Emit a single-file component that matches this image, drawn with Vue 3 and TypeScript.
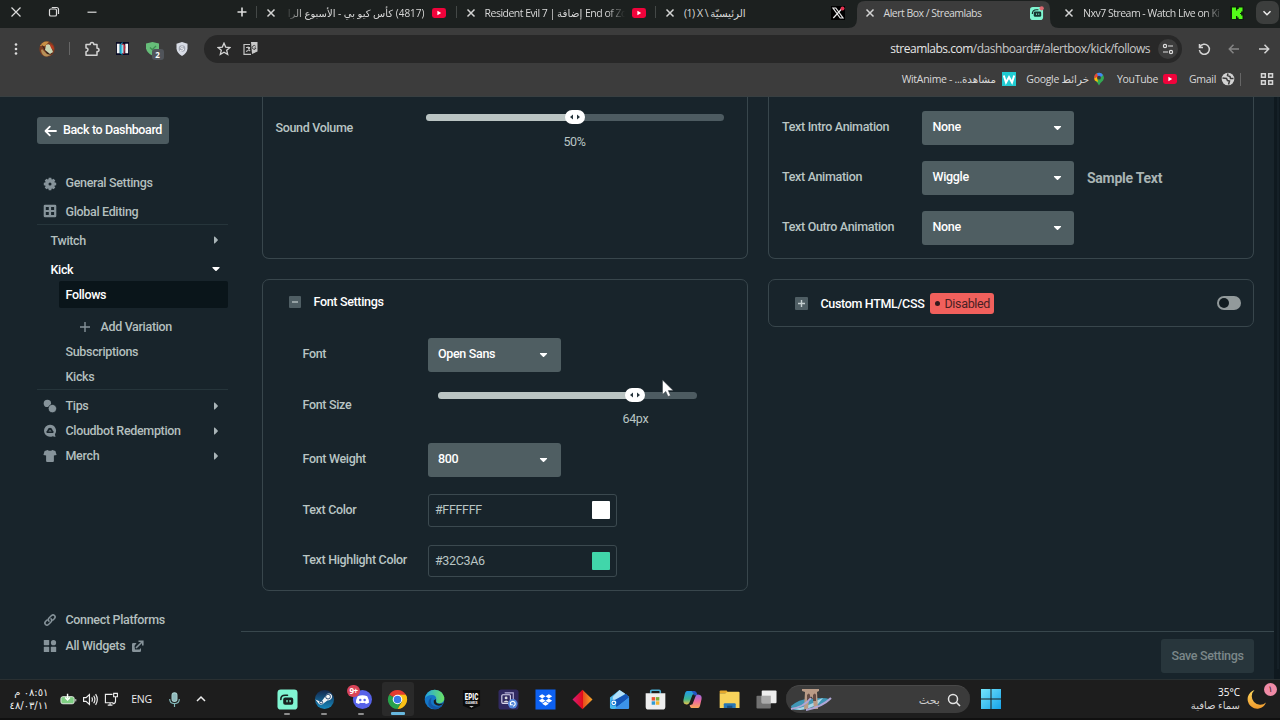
<script setup lang="ts">
interface NavItem {
  label: string
  kind: string
  icon?: string
  arrow?: string
}

const nav: NavItem[] = [
  { label: 'General Settings', kind: 'top first', icon: 'gear' },
  { label: 'Global Editing', kind: 'top ruled', icon: 'table' },
  { label: 'Twitch', kind: 'platform', arrow: 'right' },
  { label: 'Kick', kind: 'platform open', arrow: 'down' },
  { label: 'Follows', kind: 'sub active' },
  { label: 'Add Variation', kind: 'add', icon: 'plus' },
  { label: 'Subscriptions', kind: 'sub' },
  { label: 'Kicks', kind: 'sub last' },
  { label: 'Tips', kind: 'group', icon: 'coins', arrow: 'right' },
  { label: 'Cloudbot Redemption', kind: 'group', icon: 'cloudbot', arrow: 'right' },
  { label: 'Merch', kind: 'group', icon: 'shirt', arrow: 'right' },
]

const animations = [
  { label: 'Text Intro Animation', value: 'None', sample: '' },
  { label: 'Text Animation', value: 'Wiggle', sample: 'Sample Text' },
  { label: 'Text Outro Animation', value: 'None', sample: '' },
]

const colors = [
  { label: 'Text Color', value: '#FFFFFF', swatch: '#ffffff' },
  { label: 'Text Highlight Color', value: '#32C3A6', swatch: '#41d6aa' },
]

const volume = 50
const fontSize = 76.4
</script>

<template>
  <div class="screen">
    <svg class="defs" aria-hidden="true">
      <symbol id="close" viewBox="0 0 10 10"><path d="M1.5 1.5l7 7M8.5 1.5l-7 7" fill="none" stroke="currentColor" stroke-width="1.5" /></symbol>
      <symbol id="youtube" viewBox="0 0 14 10"><rect width="14" height="10" rx="2.4" fill="#f0033b" /><path d="M5.4 2.8v4.4L9.2 5z" fill="#fff" /></symbol>
      <symbol id="down" viewBox="0 0 8 6"><path d="M.6 1h6.8q.5.5 0 1L4.6 4.8q-.6.5-1.2 0L.6 2q-.5-.5 0-1z" fill="currentColor" /></symbol>
      <symbol id="right" viewBox="0 0 6 8"><path d="M1 .8v6.4q.5.5 1 0L4.7 4.6q.5-.6 0-1.2L2 .8q-.5-.5-1 0z" fill="currentColor" /></symbol>
      <symbol id="gear" viewBox="0 0 14 14"><g fill="currentColor"><path fill-rule="evenodd" d="M7 2.2a4.8 4.8 0 1 0 0 9.6 4.8 4.8 0 0 0 0-9.6zm0 3.3a1.5 1.5 0 1 1 0 3 1.5 1.5 0 0 1 0-3z" /><path d="M5.7.8h2.6l.4 2.4H5.3zM5.7 13.2h2.6l.4-2.4H5.3zM.8 5.7v2.6l2.4.4V5.3zM13.2 5.7v2.6l-2.4.4V5.3zM1.7 3.5L3.5 1.7l2 1.4-2.400 2.400zM12.300 3.500l-1.800-1.800-2 1.400 2.400 2.400zM1.700 10.500l1.800 1.800 2-1.400-2.400-2.400zM12.300 10.500l-1.800 1.800-2-1.400 2.400-2.400z" /></g></symbol>
      <symbol id="table" viewBox="0 0 14 14"><path fill="currentColor" fill-rule="evenodd" d="M2 .8h10q1.300 0 1.300 1.300v9.800q0 1.300-1.300 1.300H2q-1.300 0-1.300-1.300V2.100Q.7.800 2 .8zm.8 2.200v3h3V3zm5.300 0v3h3V3zm-5.300 5v3h3V8zm5.300 0v3h3V8z" /></symbol>
      <symbol id="plus" viewBox="0 0 12 12"><path d="M6 1v10M1 6h10" fill="none" stroke="currentColor" stroke-width="1.400" /></symbol>
      <symbol id="coins" viewBox="0 0 14 14"><g fill="currentColor"><circle cx="4.400" cy="4.400" r="3.700" /><circle cx="9.400" cy="9.600" r="4.200" stroke="#18242b" stroke-width=".8" /></g></symbol>
      <symbol id="cloudbot" viewBox="0 0 14 14"><path d="M7 .8a6 6 0 0 0 0 12q1.500 0 2.700-.6l2.800.8-.6-2.700A6 6 0 0 0 7 .8z" fill="currentColor" /><path d="M3.800 8.900q-1.300-1.500.5-2.500.4-2.600 2.700-2.600t2.700 2.600q1.800 1 .5 2.500z" fill="#18242b" /><path d="M5.800 7.300q1.200-1.300 2.400 0" fill="none" stroke="currentColor" stroke-width=".9" /></symbol>
      <symbol id="shirt" viewBox="0 0 14 14"><path d="M4.700 1q2.300 1.700 4.600 0L12.400 2.100 13.600 6l-2.700.6V12q0 1-1 1H4.100q-1 0-1-1V6.600L.4 6l1.200-3.900z" fill="currentColor" /></symbol>
    </svg>

    <header class="tabs">
      <div class="window-buttons">
        <svg width="12" height="12" viewBox="0 0 12 12"><path d="M1.500 1.500l9 9M10.500 1.500l-9 9" /></svg>
        <svg width="12" height="12" viewBox="0 0 12 12"><rect x="1.500" y="3" width="7" height="7" rx="1.300" /><path d="M3.800 1.500h4.700q2 0 2 2V8" /></svg>
        <svg width="12" height="12" viewBox="0 0 12 12"><path d="M1.500 6.200h9" /></svg>
        <svg class="new-tab" width="12" height="12" viewBox="0 0 12 12"><path d="M6 1.500v9M1.500 6h9" stroke-width="1.600" /></svg>
      </div>
      <div class="tab ruled">
        <svg class="x"><use href="#close" /></svg>
        <span class="title rtl fade-left" dir="rtl">(4817) كأس كيو بي - الأسبوع الرا</span>
        <svg class="yt"><use href="#youtube" /></svg>
      </div>
      <div class="tab ruled">
        <svg class="x"><use href="#close" /></svg>
        <span class="title fade">Resident Evil 7 | <i class="ar">إضافة</i> End of Zo</span>
        <svg class="yt"><use href="#youtube" /></svg>
      </div>
      <div class="tab ruled">
        <svg class="x"><use href="#close" /></svg>
        <span class="title">(1) X \ <i class="ar">الرئيسيّة</i></span>
        <svg class="fav" viewBox="0 0 14 14"><rect width="14" height="14" fill="#000" /><path d="M2 2h2.800l7.200 10H9.200zM11.500 2L2.300 12" fill="none" stroke="#e8e8e8" stroke-width="1.200" /><circle cx="11.500" cy="2.400" r="2" fill="#e23251" /></svg>
      </div>
      <div class="tab current">
        <svg class="tab-shape" viewBox="0 0 214 28"><path d="M0 28q9 0 9-9V9q0-8 8-8h178q8 0 8 8v10q0 9 9 9z" fill="#3c3c3c" /></svg>
        <svg class="x"><use href="#close" /></svg>
        <span class="title">Alert Box / Streamlabs</span>
        <svg class="fav" viewBox="0 0 15 15"><rect y="1" width="14" height="14" rx="3" fill="#7ff5d0" /><path d="M2.500 8.500Q2.500 4 7 4h2" fill="none" stroke="#15352f" stroke-width="1.300" /><rect x="4" y="6" width="8" height="5.600" rx="1.500" fill="#15352f" /><path d="M7 8v1.500M9.400 8v1.500" stroke="#7ff5d0" /><circle cx="12.500" cy="2.500" r="2.300" fill="#df6a72" /></svg>
      </div>
      <div class="tab">
        <svg class="x"><use href="#close" /></svg>
        <span class="title fade">Nxv7 Stream - Watch Live on Ki</span>
        <svg class="fav" viewBox="0 0 14 14"><rect width="14" height="14" fill="#10200f" /><path d="M2 1.500h4v3h1.300V3h1.400V1.500h3.800v4h-1.400V7H10v1h1.100v1.400h1.400v3.600H8.700v-1.400H7.300v-1.500H6V13H2z" fill="#53fc18" /></svg>
      </div>
      <div class="tab-search"><svg width="10" height="10" viewBox="0 0 10 10"><path d="M1.500 3.300L5 6.700l3.500-3.400" /></svg></div>
    </header>

    <div class="toolbar">
      <svg viewBox="0 0 16 16"><g fill="#ddd"><circle cx="8" cy="3.500" r="1.300" /><circle cx="8" cy="8" r="1.300" /><circle cx="8" cy="12.500" r="1.300" /></g></svg>
      <svg viewBox="0 0 16 16"><circle cx="8" cy="8" r="7.700" fill="#7b3c22" /><path d="M1 5Q4-1 10 .8L6 5z" fill="#c88f45" /><path d="M2 3l8 8 4 1-5 3z" fill="#3b231b" /><path d="M7 4q4-2 5 2l2 5-3 2-5-4z" fill="#c9d4b3" /><path d="M3 8l5 5 4 1-4 1.500q-5 0-6-6z" fill="#b89158" /><path d="M11 3q4 1 4 6l-3-2z" fill="#b8391e" /></svg>
      <i class="bar"></i>
      <svg viewBox="0 0 16 16"><path d="M2 3.500h4.200q0-2 1.800-2t1.800 2h3.200v3.700q2 0 2 1.700t-2 1.700v3.600H2v-3.500q2-.2 2-1.900T2 7z" fill="none" stroke="#d2d2d2" stroke-width="1.500" stroke-linejoin="round" /></svg>
      <svg viewBox="0 0 14 14"><rect width="14" height="14" fill="#080b25" /><path d="M1 2h3v10H1zM10 2h3v10h-3z" fill="#f4f4f4" /><path d="M4 3l3-3v14l-3-2z" fill="#15a5c9" /><path d="M6 2q4-1 4 4l-1 7H7z" fill="#bd293d" /><path d="M6 3h2v9H6z" fill="#91dce8" /></svg>
      <div class="guard">
        <svg viewBox="0 0 16 16"><path d="M7.500 1l6.500 1.500v5Q13 12 7.500 14.500 2 12 1 7.500v-5z" fill="#66bd79" /><path d="M5 6.500l2.200 2.200L11 5" fill="none" stroke="#3e8b52" stroke-width="1.300" /></svg>
        <b>2</b>
      </div>
      <svg viewBox="0 0 16 16"><path d="M8 1l5.500 1.700v5Q13 12 8 15 3 12 2.500 7.700v-5z" fill="#d8dce5" /><circle cx="8" cy="7.500" r="3.300" fill="#a5aab5" /><path d="M9.300 6q-2.600-.8-2.600.6t2.300 1.300-.5 1.600-2-.4" fill="none" stroke="#f1f3f7" /></svg>
      <div class="omnibox">
        <svg width="14" height="14" viewBox="0 0 14 14"><path d="M7 1.200l1.700 3.900 4.200.4-3.200 2.800 1 4.200L7 10.300l-3.700 2.200 1-4.200L1.100 5.500l4.200-.4z" fill="none" stroke="#d5d5d5" stroke-width="1.300" /></svg>
        <svg width="15" height="15" viewBox="0 0 15 15"><path d="M7 3.500H1v9.800h7M3 6.500h4M5 5.500q.5 3 2 4.500M6.700 6.500q-.5 3-3.700 4" fill="none" stroke="#c4c4c4" stroke-width="1.200" /><path d="M8 1h6.500v9.500L9 13z" fill="#c9c9c9" /><path d="M12.700 5.300A1.900 1.900 0 1 0 13 7h-1.700" fill="none" stroke="#444" stroke-width="1" /></svg>
        <span class="url"><b>streamlabs.com</b>/dashboard#/alertbox/kick/follows</span>
        <span class="tune"><svg width="12" height="12" viewBox="0 0 12 12"><path d="M1 3h1M6 3h5M1 9h5M10.500 9h.5" /><circle cx="3" cy="3" r="1.600" /><circle cx="9" cy="9" r="1.600" /></svg></span>
      </div>
      <svg class="line" viewBox="0 0 16 16"><path d="M3.500 3v3.500H7M3.900 6A5 5 0 1 1 3.400 9" /></svg>
      <svg class="line dim" viewBox="0 0 16 16"><path d="M13 8H3.500M7.500 3.700L3.300 8l4.200 4.300" /></svg>
      <svg class="line" viewBox="0 0 16 16"><path d="M3 8h9.500M8.500 3.700L12.700 8l-4.200 4.300" /></svg>
    </div>

    <div class="bookmarks">
      <span>WitAnime - ...<i class="ar">مشاهدة</i></span>
      <svg viewBox="0 0 14 14"><rect width="14" height="14" fill="#20cbd1" /><path d="M1.800 3.500L4 10.500l3-5.500 3 5.500 2.200-7" fill="none" stroke="#fff" stroke-width="2" /></svg>
      <span>Google <i class="ar">خرائط</i></span>
      <svg viewBox="0 0 14 14"><path d="M7 .8A4.900 4.900 0 0 0 2.900 8.500Q6 11 7 13.500 8 11 11.100 8.500A4.900 4.900 0 0 0 7 .8z" fill="#34a853" /><path d="M2.200 6A5 5 0 0 1 5 1.200L8 4 3 9z" fill="#ea4335" /><path d="M5 1.200A5 5 0 0 1 11 3L7 7z" fill="#4285f4" /><path d="M2.300 6.500L5 5l1 5-3-1.500z" fill="#fbbc04" /><circle cx="7" cy="5.700" r="1.900" fill="#3c3c3c" /></svg>
      <span>YouTube</span>
      <svg viewBox="0 -2 14 14"><use href="#youtube" width="14" height="10" /></svg>
      <span>Gmail</span>
      <svg viewBox="0 0 14 14"><circle cx="7" cy="7" r="6.300" fill="#d2d2d2" /><path d="M1.500 6l4 .5 1 2 2 .5-1 3.500M7 1.500l-.5 2 2.500 1 .5 2h3" fill="none" stroke="#3c3c3c" stroke-width="1.500" /></svg>
      <i class="bar"></i>
      <svg class="line" viewBox="0 0 14 14"><path d="M1.500 1.700h3.800v3.600H1.500zM8.700 1.700h3.800v3.600H8.700zM1.500 8.700h3.800v3.600H1.500zM8.700 8.700h3.800v3.600H8.700z" /></svg>
    </div>

    <div class="page">
      <aside class="sidebar">
        <button class="back">
          <svg width="13" height="12" viewBox="0 0 13 12"><path d="M12 6H1.800M5.800 1.700L1.500 6l4.300 4.300" fill="none" stroke="#fff" stroke-width="1.800" stroke-linejoin="round" stroke-linecap="round" /></svg>
          <span>Back to Dashboard</span>
        </button>
        <nav>
          <a v-for="item in nav" :key="item.label" :class="item.kind">
            <svg v-if="item.icon" class="nav-icon"><use :href="'#' + item.icon" /></svg>
            <span>{{ item.label }}</span>
            <svg v-if="item.arrow" class="arrow" :class="item.arrow"><use :href="'#' + item.arrow" /></svg>
          </a>
        </nav>
        <div class="side-foot">
          <a><svg class="nav-icon" viewBox="0 0 14 14"><path d="M6 8.300q-1.500-1.700 0-3.300l2.500-2.500q1.600-1.300 3 0 1.400 1.500 0 3L10 7M8 5.700q1.500 1.700 0 3.300l-2.500 2.500q-1.600 1.300-3 0-1.400-1.500 0-3L4 7" fill="none" stroke="currentColor" stroke-width="1.500" stroke-linecap="round" /></svg><span>Connect Platforms</span></a>
          <a><svg class="nav-icon" viewBox="0 0 14 14"><g fill="currentColor"><rect x=".8" y="1" width="5.400" height="5.200" rx=".6" /><circle cx="10.500" cy="3.700" r="2.600" /><rect x=".8" y="7.800" width="5.400" height="5.200" rx=".6" /><rect x="7.800" y="7.800" width="5.400" height="5.200" rx=".6" /></g></svg><span>All Widgets</span><svg class="ext" width="13" height="13" viewBox="0 0 13 13"><path d="M5.500 3H2.300Q1 3 1 4.300v6.400Q1 12 2.300 12h6.400Q10 12 10 10.700V8L8.500 9.500H4L3.500 6z" fill="currentColor" /><path d="M5 8l6.500-6.500M7.500 1.200h4.300v4.300" fill="none" stroke="currentColor" stroke-width="1.600" /></svg></a>
        </div>
      </aside>

      <main>
        <div class="columns">
          <section class="card sound">
            <label>Sound Volume</label>
            <div class="slider">
              <div class="track"><div class="fill" :style="{ width: volume + '%' }"></div><span class="knob" :style="{ left: volume + '%' }"><svg width="14" height="8" viewBox="0 0 14 8"><path d="M5 1.500v5L2 4zM9 1.500v5L12 4z" fill="#27353c" /></svg></span></div>
              <div class="val"><span :style="{ left: volume + '%' }">50%</span></div>
            </div>
          </section>

          <section class="card anim">
            <div v-for="row in animations" :key="row.label" class="anim-row">
              <label>{{ row.label }}</label>
              <div class="select">{{ row.value }}<svg><use href="#down" /></svg></div>
              <strong v-if="row.sample">{{ row.sample }}</strong>
            </div>
          </section>

          <section class="card font">
            <h3><svg width="12" height="12" viewBox="0 0 12 12"><rect width="12" height="12" rx="1" fill="#4f5e64" /><path d="M3 6h6" stroke="#c5cfd0" stroke-width="1.200" /></svg>Font Settings</h3>
            <div class="row r-font"><label>Font</label><div class="select">Open Sans<svg><use href="#down" /></svg></div></div>
            <div class="row r-size"><label>Font Size</label>
              <div class="slider">
                <div class="track"><div class="fill" :style="{ width: fontSize + '%' }"></div><span class="knob" :style="{ left: fontSize + '%' }"><svg width="14" height="8" viewBox="0 0 14 8"><path d="M5 1.500v5L2 4zM9 1.500v5L12 4z" fill="#27353c" /></svg></span></div>
                <div class="val"><span :style="{ left: fontSize + '%' }">64px</span></div>
              </div>
            </div>
            <div class="row r-weight"><label>Font Weight</label><div class="select">800<svg><use href="#down" /></svg></div></div>
            <div v-for="c in colors" :key="c.label" class="row r-color">
              <label>{{ c.label }}</label>
              <div class="color"><span>{{ c.value }}</span><i :style="{ background: c.swatch }"></i></div>
            </div>
          </section>

          <section class="card custom">
            <svg width="13" height="13" viewBox="0 0 13 13"><rect width="13" height="13" rx="1" fill="#4f5e64" /><path d="M3 6.500h7M6.500 3v7" stroke="#c5cfd0" stroke-width="1.400" /></svg>
            <b>Custom HTML/CSS</b>
            <span class="disabled"><i></i>Disabled</span>
            <span class="toggle"><i></i></span>
          </section>
        </div>
        <footer><button class="save">Save Settings</button></footer>
      </main>
      <div class="scroll"><i></i></div>
    </div>

    <div class="taskbar">
      <div class="clock"><span dir="rtl">٠٨:٥١ م</span><span>٤٨/٠٣/١١</span></div>
      <svg viewBox="0 0 18 14"><rect x="1" y="4" width="14" height="7.500" rx="2" fill="#7fcf83" stroke="#e7efe5" /><path d="M16.700 6.500v2.500" stroke="#ddd" /><path d="M8 1v5M5.500 5L8 7.500 10.500 5" fill="none" stroke="#fff" stroke-width="1.500" /></svg>
      <svg viewBox="0 0 16 14"><path d="M1.500 5.200h2.300L7 2.300v9.400L3.800 8.800H1.500zM9.200 5q1.200 2 0 4M11 3.500q2.300 3.500 0 7M12.800 2q3.200 5 0 10" fill="none" stroke="#eee" stroke-width="1.100" /></svg>
      <svg viewBox="0 0 16 16"><path d="M9 2.500H1.500v9H10M4 14h5M6.500 11.500V14" fill="none" stroke="#eee" stroke-width="1.200" /><path d="M10.300 1.500h4v3.500h-4zM12.300 5v4.500q0 3-3.300 3" fill="none" stroke="#eee" stroke-width="1.200" /></svg>
      <span class="lang">ENG</span>
      <svg viewBox="0 0 14 14"><rect x="4.700" y=".8" width="4.600" height="8" rx="2.300" fill="#8fb9bc" stroke="#a7cfce" /><path d="M2.500 6.500q0 4.300 4.500 4.300t4.500-4.300M7 10.800V14" fill="none" stroke="#83b8b9" stroke-width="1.100" /></svg>
      <svg viewBox="0 0 12 12"><path d="M2 8l4-4 4 4" fill="none" stroke="#eee" stroke-width="1.500" /></svg>

      <div class="app run"><svg viewBox="0 0 22 22"><rect x=".5" y=".5" width="21" height="21" rx="3.500" fill="#80f5d2" /><path d="M4 11Q4 6.500 8.500 6.500H11" fill="none" stroke="#17211f" stroke-width="1.700" stroke-linecap="round" /><rect x="6.500" y="9" width="10.500" height="7.500" rx="2" fill="#17211f" /><path d="M10.500 11.500v2.500M13.700 11.500v2.500" stroke="#80f5d2" stroke-width="1.300" /></svg></div>
      <div class="app run"><svg viewBox="0 0 22 22"><defs><linearGradient id="steam" x2="0" y2="1"><stop stop-color="#13264c" /><stop offset="1" stop-color="#1789bd" /></linearGradient></defs><circle cx="11" cy="11" r="10" fill="url(#steam)" /><path d="M1.500 11l6 2.500L11 9l3-4q5-1 5 3.500-1 3.500-5 3.500L9.500 15.500q-2 2-4.500 0z" fill="#f0f3f5" /><circle cx="14.700" cy="8" r="2.500" fill="#f5f5f5" stroke="#244773" stroke-width="1" /><circle cx="7.500" cy="14" r="1.600" fill="none" stroke="#244773" /></svg></div>
      <div class="app run"><svg viewBox="0 0 22 22"><circle cx="12" cy="11" r="10" fill="#5662e8" /><path d="M7 7.500q5-2 10 0 2 3.500 1.800 7-1.800 1.200-3.300 1.200l-.8-1.400q-2.700.8-5.400 0l-.8 1.400q-1.500 0-3.300-1.200Q5 11 7 7.500z" fill="#fff" /><circle cx="9.700" cy="11.500" r="1.300" fill="#5662e8" /><circle cx="14.300" cy="11.500" r="1.300" fill="#5662e8" /></svg><b class="count">9+</b></div>
      <div class="app run focus"><svg viewBox="0 0 22 22"><path d="M11 11L2.300 6A10 10 0 0 1 19.700 6z" fill="#e33b2e" /><path d="M11 11L2.300 6A10 10 0 0 0 11 21l4.500-8z" fill="#28a24b" /><path d="M11 11l8.700-5A10 10 0 0 1 11 21l4.700-8z" fill="#fbc116" /><path d="M11 6h8.700q1.300 2.300 1.300 5H13z" fill="#fbc116" /><circle cx="11" cy="11" r="5" fill="#fff" /><circle cx="11" cy="11" r="3.900" fill="#3978e6" /></svg></div>
      <div class="app"><svg viewBox="0 0 22 22"><defs><linearGradient id="edge"><stop stop-color="#24a3e0" /><stop offset="1" stop-color="#6ce462" /></linearGradient></defs><circle cx="11" cy="11" r="10.300" fill="#1476c7" /><path d="M1 10Q3 .7 11.500.7q8 .5 9.800 8.300.2 5.500-5 6-4.500 0-3.300-3.500Q13 6 8 6.300 3 6.500 1 10z" fill="url(#edge)" /><path d="M8 9q-3 8 5 9.500 4 .4 6.500-2Q16 22 10 21 3 19 5 12q1-2 3-3z" fill="#1457a5" /><path d="M12.500 10.500q-1 5 4 5.200 3-.1 4.200-1.700-1.500 3-5 3.500-6-.500-5.500-5.500z" fill="#1d1d1d" /></svg></div>
      <div class="app"><svg viewBox="0 0 22 22"><path d="M2 1h18v16.500L11 21.500l-9-4z" fill="#0b0b0b" /><text x="11" y="11.500" text-anchor="middle" font-family="Roboto" font-size="9" font-weight="900" fill="#fff" textLength="14" lengthAdjust="spacingAndGlyphs">EPIC</text><text x="11" y="16" text-anchor="middle" font-family="Roboto" font-size="4" font-weight="900" fill="#ddd" textLength="13">GAMES</text><path d="M8.500 18h5L11 19.500z" fill="#fff" /></svg></div>
      <div class="app"><svg viewBox="0 0 22 22"><rect x=".5" y=".5" width="21" height="21" rx="3" fill="#302960" /><rect x="4" y="6" width="9" height="9" rx="1" fill="none" stroke="#d9d6ec" stroke-width="1.200" /><path d="M7 4h9v7" fill="none" stroke="#b8b3db" stroke-width="1.200" /><circle cx="8.500" cy="9.300" r="1.500" fill="#ddd" /><path d="M5.500 14q3-4 6 0" fill="#ddd" /><circle cx="15.500" cy="15.500" r="5" fill="#5486dc" /><path d="M13.200 16.500a2.500 2.500 0 1 1 2.500 1.500M13 13.500v3h2.500" fill="none" stroke="#fff" stroke-width="1.200" /></svg></div>
      <div class="app"><svg viewBox="0 0 22 22"><rect x=".5" y=".5" width="21" height="21" fill="#0d61f2" /><path d="M7.500 5.500l3.500 2.200L7.500 10 4 7.700zM14.500 5.500L18 7.700 14.500 10 11 7.700zM7.500 10l3.500 2.200-3.500 2.300L4 12.200zM14.500 10l3.500 2.200-3.500 2.300-3.500-2.300zM11 13.200l3.500 2.200L11 17.600l-3.500-2.200z" fill="#fff" /></svg></div>
      <div class="app"><svg viewBox="0 0 22 22"><defs><linearGradient id="dia"><stop stop-color="#d51d79" /><stop offset=".5" stop-color="#e20b1b" /><stop offset=".52" stop-color="#e84a1b" /><stop offset="1" stop-color="#f5a72b" /></linearGradient></defs><path d="M11 .8L21.500 11 11 21.200.5 11z" fill="url(#dia)" /></svg></div>
      <div class="app"><svg viewBox="0 0 22 22"><path d="M1 9l10-8 10 7v11q0 2-2 2H3q-2 0-2-2z" fill="#49b8ed" /><path d="M4 8l7-7 6 4-13 9z" fill="#b4e1fb" /><path d="M5 12L18 5l3 4-13 10z" fill="#1556b9" /><path d="M8 19L21 9v10q0 2-2 2H6z" fill="#3c93e9" /><circle cx="5" cy="14.500" r="3.200" fill="#117ad3" /><circle cx="5" cy="14.500" r="1.900" fill="none" stroke="#fff" stroke-width="1.300" /></svg></div>
      <div class="app"><svg viewBox="0 0 22 22"><path d="M6 5V2.500q0-1.200 1.200-1.200h7.600q1.200 0 1.200 1.200V5" fill="none" stroke="#4aaed4" stroke-width="1.700" /><path d="M.7 4.500h20.600v14q0 3-3 3H3.700q-3 0-3-3z" fill="#eee" /><path d="M7 8.500h3.600v3.600H7z" fill="#e8502f" /><path d="M11.400 8.500H15v3.600h-3.600z" fill="#7aab35" /><path d="M7 12.900h3.600v3.600H7z" fill="#319bd4" /><path d="M11.400 12.900H15v3.600h-3.600z" fill="#f2b52e" /></svg></div>
      <div class="app"><svg viewBox="0 0 22 22"><defs><linearGradient id="co1" x2="0" y2="1"><stop stop-color="#2299ed" /><stop offset=".6" stop-color="#3bb590" /><stop offset="1" stop-color="#e9c447" /></linearGradient><linearGradient id="co2" x2="0" y2="1"><stop stop-color="#9a69e2" /><stop offset=".5" stop-color="#ee6a9c" /><stop offset="1" stop-color="#f9aa58" /></linearGradient></defs><path d="M5 2h6q2.500 0 3 3l-3 1-3 8q-1 3-4 2-3-.3-2.500-4.500L3 5q.5-2.500 2-3z" fill="url(#co1)" /><path d="M17 20h-6q-2.500 0-3-3l3-1 3-8q1-3 4-2 3 .3 2.500 4.500L19 17q-.5 2.500-2 3z" fill="url(#co2)" /><path d="M10 2h2.500q3 .3 3.500 4l-2.500 1z" fill="#2456c2" /></svg></div>
      <div class="app"><svg viewBox="0 0 22 22"><path d="M.7 2.500Q.7 1.500 1.700 1.500H8l2 3H.7z" fill="#e5a92c" /><path d="M.7 4.500h6L9 3h11.500q1 0 1 1v16H.7z" fill="#f8d35b" /><path d="M5 20v-4q0-1 1-1h10.500q1 0 1 1v4z" fill="#2776b5" /><path d="M8.500 17.500h5.500V20H8.500z" fill="#174e82" /></svg></div>
      <div class="app"><svg viewBox="0 0 22 22"><rect x=".5" y="7" width="15" height="13.500" rx="1" fill="#727272" /><rect x="6" y="1.500" width="15.500" height="13.500" rx="1" fill="#eee" /><path d="M6 7h9.500v8H6z" fill="#aaa" /></svg></div>
      <div class="search">
        <svg class="bridge" width="42" height="24" viewBox="0 0 42 24"><path d="M1 18q9-8 20-7 13-2 18 0-4 5-10 6-12 5-22 5-6 0-6-4z" fill="#4097b6" /><path d="M3 21q15-2 25-9l5-2-5 6q-9 5-18 6z" fill="#a9d6e6" /><path d="M12 1h17v2l-2 1 1 17h-4l-1-10q-2-5-4 0l-1 10h-4l1-17-3-1z" fill="#b99b86" /><path d="M17 7q2-3 3 0v6h-3zM23 7q2-3 3 0v6h-3z" fill="#644c45" /><path d="M1 21q13-2 20-11M16 22q16-3 25-12" fill="none" stroke="#b0a6d5" stroke-width="2" /></svg>
        <span>بحث</span>
        <svg width="14" height="14" viewBox="0 0 14 14"><circle cx="6" cy="6" r="4.500" fill="none" stroke="#e5e5e5" stroke-width="1.500" /><path d="M9.300 9.300l3.700 3.700" stroke="#e5e5e5" stroke-width="1.600" /></svg>
      </div>
      <svg class="win" viewBox="0 0 20 20"><defs><linearGradient id="win" x2="1" y2="1"><stop stop-color="#75e5fb" /><stop offset="1" stop-color="#16a2e8" /></linearGradient></defs><path d="M0 0h9.500v9.500H0zM10.500 0H20v9.500h-9.500zM0 10.500h9.500V20H0zM10.500 10.500H20V20h-9.500z" fill="url(#win)" /></svg>
      <div class="weather"><span>35°C</span><span class="sky">سماء صافية</span></div>
      <div class="moon"><svg width="20" height="20" viewBox="0 0 20 20"><defs><linearGradient id="moon" x2="0" y2="1"><stop stop-color="#ffd85d" /><stop offset="1" stop-color="#ef982b" /></linearGradient></defs><path d="M7.500 1A9.500 9.500 0 1 0 19 13.500 8 8 0 0 1 7.500 1z" fill="url(#moon)" /></svg><b>١</b></div>
    </div>

    <svg class="pointer" width="14" height="20" viewBox="0 0 14 20"><path d="M1.500 1v14.500l3.300-3 2.200 5 2.500-1.100-2.200-4.800h4.900z" fill="#fff" stroke="#333b40" stroke-width=".5" /></svg>
  </div>
</template>

<style>
html, body { margin: 0; background: #18242b; overflow: hidden; }
</style>

<style scoped>
* { box-sizing: border-box; }
.screen { position: relative; width: 1280px; height: 720px; overflow: hidden; display: flex; flex-direction: column; background: #18242b; font-family: Roboto, "DejaVu Sans", sans-serif; }
.defs { position: absolute; width: 0; height: 0; }
svg { display: block; flex: none; }
i { font-style: normal; }
.ar { font-size: .98em; letter-spacing: 0; }

.tabs, .toolbar, .bookmarks, .taskbar { font-family: "Open Sans", "Noto Sans", "DejaVu Sans", sans-serif; color: #d8d8d8; flex: none; }
.tabs { height: 28px; display: flex; background: #1c201f; font-size: 10.5px; letter-spacing: -.5px; }
.window-buttons { width: 256px; display: flex; align-items: center; padding: 0 8px 4px 10px; gap: 26px; }
.window-buttons svg { fill: none; stroke: #ddd; stroke-width: 1.2; }
.window-buttons .new-tab { margin-left: auto; }
.tab { position: relative; width: 199.5px; height: 26px; display: flex; align-items: center; padding: 0 10px; }
.ruled::before { content: ""; position: absolute; left: 0; top: 6px; width: 1px; height: 12px; background: #444847; }
.x { position: relative; width: 10px; height: 10px; color: #d4d4d4; margin-right: 9px; }
.title { position: relative; width: 140px; white-space: nowrap; line-height: 18px; }
.title.rtl { direction: rtl; letter-spacing: 0; font-size: 10px; }
.fade { mask-image: linear-gradient(to right, #000 122px, transparent 140px); }
.fade-left { mask-image: linear-gradient(to left, #000 122px, transparent 140px); }
.yt { width: 14px; height: 10px; margin-left: 7px; }
.fav { position: relative; width: 14px; height: 14px; margin-left: 7px; }
.tab-shape { position: absolute; left: -7px; top: 0; width: 213px; height: 28px; }
.tab-search { width: 23px; height: 23px; margin: 1px 0 0 2px; border-radius: 7px; background: #3c3e3d; display: grid; place-items: center; }
.tab-search svg { fill: none; stroke: #eee; stroke-width: 1.5; }

.toolbar { height: 40px; padding-top: 1px; display: grid; grid-template-columns: 32px 30px 14px 32px 28px 33px 26px 9px 978px 7px 29px 31px 30px; align-items: center; justify-items: center; background: #3c3c3c; }
.toolbar > svg { width: 16px; height: 16px; }
.toolbar > svg:nth-child(5) { width: 13px; height: 13px; }
.line { fill: none; stroke: #d4d4d4; stroke-width: 1.5; }
.dim { stroke: #858585; }
.bar { width: 1px; height: 13px; background: #666; }
.guard { position: relative; width: 16px; height: 16px; }
.guard b { position: absolute; left: 7px; top: 8px; width: 12px; height: 11px; border-radius: 3px; background: #50545a; color: #fff; font-size: 8px; line-height: 11px; text-align: center; }
.omnibox { grid-column: 9; width: 978px; height: 28px; border-radius: 14px; background: #282828; display: flex; align-items: center; padding: 0 4px 0 13px; gap: 12px; }
.toolbar > .omnibox + svg { grid-column: 11; }
.url { margin-left: auto; font-size: 12px; letter-spacing: -.49px; line-height: 20px; color: #c9c9c9; margin-right: -4px; }
.url b { font-weight: 400; color: #e6e6e6; }
.tune { width: 20px; height: 20px; border-radius: 50%; background: #3c3c3c; display: grid; place-items: center; }
.tune svg { fill: none; stroke: #ddd; stroke-width: 1.2; }

.bookmarks { height: 29px; display: grid; grid-template-columns: 97px 26px 67px 20px 49px 24px 34px 24px 2px 32px; justify-content: end; align-items: center; padding: 0 6px 6px 0; background: #3c3c3c; border-bottom: 1px solid #383f41; font-size: 10.5px; letter-spacing: -.3px; }
.bookmarks > svg { width: 14px; height: 14px; justify-self: center; }
.bookmarks > span { white-space: nowrap; justify-self: end; }
.bookmarks > :last-child { justify-self: end; }

.page { height: 582px; flex: none; display: flex; color: #b9c5c4; font-size: 12.5px; font-weight: 500; letter-spacing: -.33px; }
.sidebar { width: 241px; flex: none; display: flex; flex-direction: column; padding: 20px 13px 20px 37px; color: #b3bfbe; }
.back { align-self: flex-start; width: 132px; height: 27px; border: 0; border-radius: 3px; background: #4c5b60; color: #fff; font: 500 12.5px Roboto; letter-spacing: -.38px; display: flex; align-items: center; gap: 6px; padding: 0 0 0 7px; white-space: nowrap; }
.back span { padding-bottom: 2px; }
nav { margin-top: 25px; display: flex; flex-direction: column; }
nav a, .side-foot a { height: 25px; display: flex; align-items: center; padding-left: 6px; white-space: nowrap; }
.nav-icon { width: 14px; height: 14px; margin-right: 8.5px; color: #86939a; }
nav .top { height: 28px; }
nav .first { height: 29px; }
nav .first span { padding-bottom: 2px; }
nav .ruled { border-bottom: 1px solid #26353b; height: 27px; }
nav .ruled::before { content: none; }
nav .platform { height: 29px; padding: 1px 0 0 13.5px; }
nav .platform.open { color: #fff; }
.arrow { margin: 0 9px 0 auto; width: 6px; height: 8px; color: #a9b4b7; }
.arrow.down { width: 8px; height: 6px; color: #fff; margin-right: 8px; }
nav .sub { padding-left: 28.5px; }
nav .sub.active { margin: -2px 0 0 22px; height: 27px; padding-left: 6.5px; border-radius: 2px; background: #0a151a; color: #fff; }
nav .add { padding-left: 42px; height: 25px; margin: 6px 0 0; }
nav .add .nav-icon { width: 12px; height: 12px; margin-right: 9.5px; }
nav .last { border-bottom: 1px solid #26353b; height: 26px; margin-bottom: 3px; }
.side-foot { margin-top: auto; }
.side-foot a { height: 26px; }
.side-foot a span { padding-bottom: 1px; }
.ext { color: #86939a; margin-left: 6px; }

main { width: 1033px; flex: none; display: flex; flex-direction: column; }
.columns { height: 534px; padding: 0 20px 0 20.5px; display: grid; grid-template-columns: 486px 486px; grid-template-rows: 162px 312px; gap: 20px 20.5px; align-items: start; }
.card { border: 1px solid #38464c; border-radius: 7px; }
.sound { height: 162px; border-top: 0; border-radius: 0 0 7px 7px; display: flex; padding: 0 23px 0 13px; align-items: flex-start; }
.sound label { width: 150px; margin-top: 23px; line-height: 16px; }
.sound .slider { width: 298px; margin-top: 17px; }
.slider .track { position: relative; height: 7px; border-radius: 4px; background: #4d5b61; }
.fill { height: 7px; border-radius: 4px; background: #bac4c3; }
.knob { position: absolute; top: -4px; width: 20px; height: 14px; margin-left: -10px; border-radius: 7px; background: #fff; display: grid; place-items: center; }
.val { position: relative; height: 16px; margin-top: 12.5px; line-height: 16px; font-weight: 400; }
.val span { position: absolute; transform: translateX(-50%); }
.anim { height: 162px; border-top: 0; border-radius: 0 0 7px 7px; padding: 14px 13px 0; display: flex; flex-direction: column; gap: 16.5px; }
.anim-row { display: flex; align-items: center; height: 33.5px; }
.anim-row label { width: 140px; padding-bottom: 2px; }
.anim-row .select { width: 152px; }
.anim-row strong { margin-left: 13px; font-size: 14px; font-weight: 700; color: #a9b4b4; letter-spacing: -.25px; }
.select { width: 133px; height: 33.5px; border-radius: 3px; background: #4f5e62; color: #fff; display: flex; align-items: center; justify-content: space-between; padding: 0 12.5px 2px 10.5px; }
.select svg { width: 9px; height: 6px; margin-top: 2px; }
.font { height: 312px; padding: 13px 0 0 40px; }
h3 { margin: 0 0 0 -14px; height: 17px; font-size: 12.5px; font-weight: 500; color: #fff; display: flex; align-items: center; gap: 13px; }
.row { display: flex; align-items: center; height: 33.5px; }
.row label { width: 125px; padding-bottom: 2px; }
.r-font { margin-top: 28px; }
.r-size { margin-top: 17px; }
.r-size .slider { width: 259px; margin: 3px 0 0 10px; align-self: flex-start; }
.r-weight { margin-top: 21px; }
.r-color { height: 32.5px; margin-top: 17.5px; }
.r-color + .r-color { margin-top: 18px; }
.color { width: 189px; height: 32.5px; border: 1px solid #3b494f; border-radius: 3px; display: flex; align-items: center; justify-content: space-between; padding: 0 5.5px 0 6.5px; font-weight: 400; }
.color span { padding-bottom: 1px; }
.color i { width: 18px; height: 18px; border-radius: 1px; }
.custom { height: 48px; display: flex; align-items: center; padding: 0 12.5px 0 26px; }
.custom b { margin: 0 6px 0 12.5px; width: 103px; font-weight: 500; color: #fff; white-space: nowrap; }
.disabled { width: 64px; height: 21px; border-radius: 3px; background: #f1605c; color: #4a2023; display: flex; align-items: center; font-weight: 400; padding-left: 5px; }
.disabled i { width: 5px; height: 5px; margin-right: 5px; border-radius: 50%; background: #34191c; }
.toggle { margin-left: auto; width: 24px; height: 14px; border-radius: 7px; background: #929a9b; padding: 2px; }
.toggle i { display: block; width: 10px; height: 10px; border-radius: 50%; background: #111b20; }
footer { flex: 1; border-top: 1px solid #38474d; display: flex; justify-content: flex-end; align-items: flex-start; padding: 7px 20px 0 0; }
.save { width: 93px; height: 34px; border: 0; border-radius: 3px; background: #28363c; color: #7b8789; font: 500 12.5px Roboto; letter-spacing: -.33px; padding: 0 0 2px; white-space: nowrap; }
.scroll { width: 6px; background: #0f191f; padding: 0 1px 0 3px; }
.scroll i { display: block; height: 572px; background: #152027; }

.taskbar { height: 41px; background: #1d1d1d; border-top: 1px solid #293032; border-bottom: 2px solid #101010; display: grid; grid-template-columns: 58px 20px 24px 18px 43px 22px 31px 53px repeat(14, 36.85px) 186px 41px 1fr 38px; align-items: center; justify-items: center; font-size: 10px; color: #eee; }
.clock { display: flex; flex-direction: column; font: 10px/13px "DejaVu Sans"; letter-spacing: -1px; }
.taskbar > svg { width: 17px; height: 15px; }
.lang { font-size: 10.5px; letter-spacing: -.3px; }
.taskbar > svg:nth-child(7) { width: 12px; height: 12px; }
.app { position: relative; width: 32px; height: 34px; display: grid; place-items: center; border-radius: 3px; }
.app:nth-of-type(2) { grid-column: 9; }
.app svg { width: 21px; height: 21px; }
.run::after { content: ""; position: absolute; bottom: 1px; left: 13px; width: 6px; height: 2px; border-radius: 1px; background: #8c8c8c; }
.focus { background: #2a2a2a; }
.focus::after { left: 9px; width: 14px; height: 3px; background: #68b8df; }
.count { position: absolute; left: 2px; top: 3px; width: 13px; height: 12px; border-radius: 6px; background: #d84358; color: #fff; font-size: 8px; line-height: 12px; text-align: center; letter-spacing: -.5px; }
.search { width: 184px; height: 28px; border-radius: 14px; background: #3b3b3b; border-top: 1px solid #494949; display: flex; align-items: center; padding: 0 9px 0 4px; color: #cfcfcf; font-size: 11px; }
.search span { margin: 0 7px 0 auto; }
.taskbar .win { width: 20px; height: 20px; }
.weather { display: flex; flex-direction: column; align-items: flex-end; justify-self: end; font-size: 10px; line-height: 13px; padding-right: 2px; color: #fff; }
.sky { font-size: 10px; color: #d5d5d5; }
.moon { position: relative; width: 38px; height: 34px; padding: 7px 0 0 5px; }
.moon b { position: absolute; right: 3px; top: 1px; width: 13px; height: 13px; border-radius: 50%; background: #f08ba7; color: #3a2028; font: 9px/13px "DejaVu Sans"; text-align: center; }
.pointer { position: absolute; left: 661px; top: 379px; }
</style>
